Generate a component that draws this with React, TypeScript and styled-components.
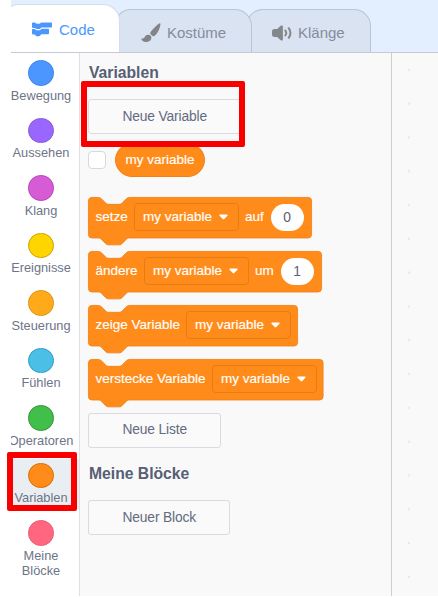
import React from "react";
import styled, { createGlobalStyle, css } from "styled-components";

const GlobalStyle = createGlobalStyle`
  * { box-sizing: border-box; }
  body { margin: 0; background: #fff; font-family: "Liberation Sans", Arial, sans-serif; }
`;

const ORANGE = "#ff8c1a";
const ORANGE_EDGE = "#f0801a";

const Page = styled.div`
  width: 438px;
  height: 597px;
  padding: 0 0 1px 11px;
  overflow: hidden;
  background: #fff;
`;

const Editor = styled.div`
  display: flex;
  flex-direction: column;
  height: 596px;
  overflow: hidden;
`;

const TabBar = styled.div`
  display: flex;
  align-items: flex-end;
  height: 53px;
  flex: none;
  background: #e3effe;
  border-bottom: 1px solid #c4cbd6;
`;

const Tab = styled.div<{ $active?: boolean; $width: number; $pad: number; $gap: number; $z: number }>`
  position: relative;
  z-index: ${(p) => p.$z};
  display: flex;
  align-items: center;
  gap: ${(p) => p.$gap}px;
  width: ${(p) => p.$width}px;
  height: 43.5px;
  margin-left: -6px;
  padding: 4px 0 0 ${(p) => p.$pad}px;
  border: 1px solid #b9c4d4;
  border-bottom: 0;
  border-radius: 17px 17px 0 0;
  background: #d9e3f2;
  color: #858b9b;
  font-size: 15px;
  line-height: 18px;
  ${(p) =>
    p.$active &&
    css`
      height: 48px;
      margin-left: -9px;
      padding-top: 2px;
      border-color: #d3deeb;
      background: #fff;
      color: #4c97ff;
    `}
`;

const Icon = styled.svg`
  display: block;
  flex: none;
`;

const Workspace = styled.div`
  display: flex;
  flex: 1;
  min-height: 0;
`;

const Sidebar = styled.nav`
  display: flex;
  flex-direction: column;
  gap: 7.5px;
  width: 69px;
  flex: none;
  padding-top: 3px;
  overflow: hidden;
  background: #fff;
  border-right: 1px solid #dcdfe4;
`;

const Category = styled.div<{ $selected?: boolean }>`
  display: flex;
  flex-direction: column;
  align-items: center;
  height: 50px;
  flex: none;
  margin-left: -4px;
  padding: 4px 4px 0 0;
  background: ${(p) => (p.$selected ? "#e9eef2" : "transparent")};
`;

const Dot = styled.span<{ $color: string; $edge: string }>`
  width: 25.5px;
  height: 25.5px;
  flex: none;
  border-radius: 50%;
  border: 1px solid ${(p) => p.$edge};
  background: ${(p) => p.$color};
`;

const CategoryName = styled.span`
  margin-top: 2px;
  color: #6e7487;
  font-size: 12.8px;
  line-height: 15px;
  text-align: center;
  white-space: pre;
`;

const Palette = styled.section`
  display: flex;
  flex-direction: column;
  align-items: flex-start;
  width: 312px;
  flex: none;
  padding: 11px 0 0 8px;
  background: #f9f9f9;
  border-right: 1px solid #cdcfd2;
`;

const Canvas = styled.div`
  flex: 1;
  background-color: #f9f9f9;
  background-image: radial-gradient(circle at center, #e6e6e6 0, #e9e9e9 1px, transparent 1.7px);
  background-size: 33.7px 33.8px;
  background-position: 0 0;
`;

const Heading = styled.h2<{ $top?: number }>`
  margin: ${(p) => p.$top ?? 0}px 0 0 1px;
  color: #575e75;
  font-size: 15.7px;
  line-height: 18px;
  font-weight: 700;
`;

const PaletteButton = styled.button<{ $width: number; $top: number }>`
  width: ${(p) => p.$width}px;
  height: 35px;
  flex: none;
  margin: ${(p) => p.$top}px 0 0;
  padding: 0 0 0 33.5px;
  border: 1px solid #d9dbde;
  border-radius: 3px;
  background: #fafafa;
  color: #636a7f;
  font: 13.8px/18px "Liberation Sans", Arial, sans-serif;
  letter-spacing: -0.15px;
  text-align: left;
  white-space: nowrap;
`;

const ReporterRow = styled.div`
  display: flex;
  align-items: center;
  gap: 9px;
  height: 34px;
  margin-top: 9px;
`;

const Checkbox = styled.span`
  width: 18px;
  height: 18px;
  border: 1px solid #d9d9d9;
  border-radius: 4px;
  background: #fff;
`;

const Reporter = styled.span`
  display: flex;
  align-items: center;
  justify-content: center;
  width: 90px;
  height: 34px;
  border: 1px solid ${ORANGE_EDGE};
  border-radius: 17px;
  background: ${ORANGE};
`;

const BlockText = styled.span<{ $width?: number }>`
  width: ${(p) => (p.$width ? `${p.$width}px` : "auto")};
  color: #fff;
  font-size: 13.5px;
  line-height: 18px;
  white-space: nowrap;
  -webkit-text-stroke: 0.15px #fff;
`;

const BlockList = styled.div`
  display: flex;
  flex-direction: column;
  gap: 12.6px;
  margin-top: 19.7px;
`;

const Block = styled.div<{ $width: number }>`
  position: relative;
  display: flex;
  align-items: center;
  width: ${(p) => p.$width}px;
  height: 41.4px;
  padding-left: 7.5px;
`;

const BlockShape = styled.svg`
  position: absolute;
  left: 0;
  top: 0;
  overflow: visible;
`;

const BlockContent = styled.div`
  position: relative;
  display: flex;
  align-items: center;
`;

const Dropdown = styled.span`
  display: flex;
  align-items: center;
  gap: 6px;
  width: 105px;
  height: 28px;
  margin-right: 6px;
  padding-left: 8px;
  border: 1px solid #e67c12;
  border-radius: 3.5px;
`;

const NumberInput = styled.span`
  display: flex;
  align-items: center;
  justify-content: center;
  width: 33px;
  height: 27px;
  border-radius: 14px;
  background: #fff;
  color: #575e75;
  font-size: 13.8px;
`;

const Highlight = styled.div<{ $x: number; $y: number; $w: number; $h: number }>`
  position: absolute;
  z-index: 10;
  left: ${(p) => p.$x}px;
  top: ${(p) => p.$y}px;
  width: ${(p) => p.$w}px;
  height: ${(p) => p.$h}px;
  border: 6px solid #f80000;
  border-radius: 2px;
  pointer-events: none;
`;

const categories = [
  { name: "Bewegung", color: "#4c97ff", edge: "#3f83e6" },
  { name: "Aussehen", color: "#9966ff", edge: "#855cd6" },
  { name: "Klang", color: "#d65cd6", edge: "#bd42bd" },
  { name: "Ereignisse", color: "#ffd500", edge: "#cca300" },
  { name: "Steuerung", color: "#ffab19", edge: "#dd921a" },
  { name: "Fühlen", color: "#4cbfe6", edge: "#2e9ec8" },
  { name: "Operatoren", color: "#40bf4a", edge: "#389438" },
  { name: "Variablen", color: "#ff8c1a", edge: "#db6e00" },
  { name: "Meine\nBlöcke", color: "#ff6680", edge: "#f25a76" },
];

const blocks = [
  { label: "setze", labelWidth: 38.5, width: 224, suffix: "auf", suffixWidth: 25.5, value: "0" },
  { label: "ändere", labelWidth: 48.5, width: 234, suffix: "um", suffixWidth: 25.5, value: "1" },
  { label: "zeige Variable", labelWidth: 90.5, width: 210 },
  { label: "verstecke Variable", labelWidth: 116.5, width: 235.5 },
];

const SCALE = 0.8625;

/** Stack block outline with the notch on top and the bump underneath. */
function Outline({ width }: { width: number }) {
  const w = width / SCALE - 0.5;
  const d = `M0.5 4 A4 4 0 0 1 4.5 0.5 H12 c2 0 3 1 4 2 l4 4 c1 1 2 2 4 2 h12 c2 0 3 -1 4 -2 l4 -4 c1 -1 2 -2 4 -2 H${w - 4} a4 4 0 0 1 4 4 v39 a4 4 0 0 1 -4 4 H48 c-2 0 -3 1 -4 2 l-4 4 c-1 1 -2 2 -4 2 h-12 c-2 0 -3 -1 -4 -2 l-4 -4 c-1 -1 -2 -2 -4 -2 H4.5 a4 4 0 0 1 -4 -4 z`;
  return (
    <BlockShape width={width} height="49">
      <path d={d} transform={`scale(${SCALE})`} fill={ORANGE} stroke={ORANGE_EDGE} strokeWidth="1" />
    </BlockShape>
  );
}

function VariableMenu() {
  return (
    <Dropdown>
      <BlockText $width={70}>my variable</BlockText>
      <Icon width="9" height="6" viewBox="0 0 9 6">
        <path d="M1.2 0.4h6.6c.9 0 1.2.8.6 1.4L5.3 5.1c-.5.5-1.1.5-1.6 0L.6 1.8C0 1.2.3.4 1.2.4z" fill="#fff" />
      </Icon>
    </Dropdown>
  );
}

function CodeIcon() {
  return (
    <Icon width="20" height="15" viewBox="0 0 20 15" fill="#4c97ff">
      <path d="M.8.500H3l1.600 1.300h3L9.200.500h10q.8 0 .8.800v3.400q0 .8-.8.800H9.400L7.800 7.100H4.500L2.900 5.900H.8Q0 5.900 0 5.100V1.300Q0 .500.8.500z" />
      <path d="M.8 7H2.700L4.300 8.300h3.700l1.600-1.500h6.600q.8 0 .8.800v3.800q0 .8-.8.800H9.400l-1.700 1.700q-.3.300-.8.300H4.900q-.5 0-.8-.3l-1.500-1.500H.8q-.8 0-.8-.8V7.800Q0 7 .8 7z" />
    </Icon>
  );
}

function BrushIcon() {
  return (
    <Icon width="20" height="20" viewBox="0 0 20 20" fill="#828588">
      <path d="M18.300.4c.9-.2 1.300.3 1.100 1.300-.5 4-2.800 8.300-5.300 10.900-.9.900-1.900 1-2.800.2L9.900 11.600c-.9-.8-.8-1.900-.1-2.900C11.900 5.800 15.500 2 18.300.4z" />
      <path d="M7.400 11.700c1.900.1 3.200 1.500 3 3.300-.3 3.100-3.500 4.400-6.400 3.900-1.700-.3-3.100-1.300-3.600-2.600-.2-.7.200-.9.900-.9 1.500.1 2-.4 2.500-1.600.6-1.400 1.900-2.200 3.600-2.100z" />
    </Icon>
  );
}

function SpeakerIcon() {
  return (
    <Icon width="20" height="16" viewBox="0 0 20 16" fill="#85888a">
      <path d="M8.800.700C9.800.1 10.900.6 10.900 1.700v12.600c0 1.100-1.100 1.600-2.100 1L5.100 12H2.500C.8 12 0 11.100 0 9.600V6.400C0 4.900.8 4 2.500 4h2.600z" />
      <path d="M13.300 5.500q1.900 2.500 0 5M16.700 3.200q3.500 4.800 0 9.600" fill="none" stroke="#85888a" strokeWidth="2" strokeLinecap="round" />
    </Icon>
  );
}

export default function App() {
  return (
    <>
      <GlobalStyle />
      <Page>
        <Editor>
          <TabBar>
            <Tab $active $width={118} $pad={29} $gap={7} $z={3}>
              <CodeIcon />
              Code
            </Tab>
            <Tab $width={138} $pad={26} $gap={6} $z={2}>
              <BrushIcon />
              Kostüme
            </Tab>
            <Tab $width={125} $pad={25} $gap={6} $z={1}>
              <SpeakerIcon />
              Klänge
            </Tab>
          </TabBar>
          <Workspace>
            <Sidebar>
              {categories.map((c) => (
                <Category key={c.name} $selected={c.name === "Variablen"}>
                  <Dot $color={c.color} $edge={c.edge} />
                  <CategoryName>{c.name}</CategoryName>
                </Category>
              ))}
            </Sidebar>
            <Palette>
              <Heading>Variablen</Heading>
              <PaletteButton $width={154} $top={17}>Neue Variable</PaletteButton>
              <ReporterRow>
                <Checkbox />
                <Reporter>
                  <BlockText>my variable</BlockText>
                </Reporter>
              </ReporterRow>
              <BlockList>
                {blocks.map((b) => (
                  <Block key={b.label} $width={b.width}>
                    <Outline width={b.width} />
                    <BlockContent>
                      <BlockText $width={b.labelWidth}>{b.label}</BlockText>
                      <VariableMenu />
                      {b.suffix && <BlockText $width={b.suffixWidth}>{b.suffix}</BlockText>}
                      {b.value && <NumberInput>{b.value}</NumberInput>}
                    </BlockContent>
                  </Block>
                ))}
              </BlockList>
              <PaletteButton $width={133} $top={12.5}>Neue Liste</PaletteButton>
              <Heading $top={17.5}>Meine Blöcke</Heading>
              <PaletteButton $width={142} $top={17}>Neuer Block</PaletteButton>
            </Palette>
            <Canvas />
          </Workspace>
        </Editor>
        <Highlight $x={81} $y={81} $w={164} $h={66} />
        <Highlight $x={7} $y={452} $w={70} $h={59} />
      </Page>
    </>
  );
}
